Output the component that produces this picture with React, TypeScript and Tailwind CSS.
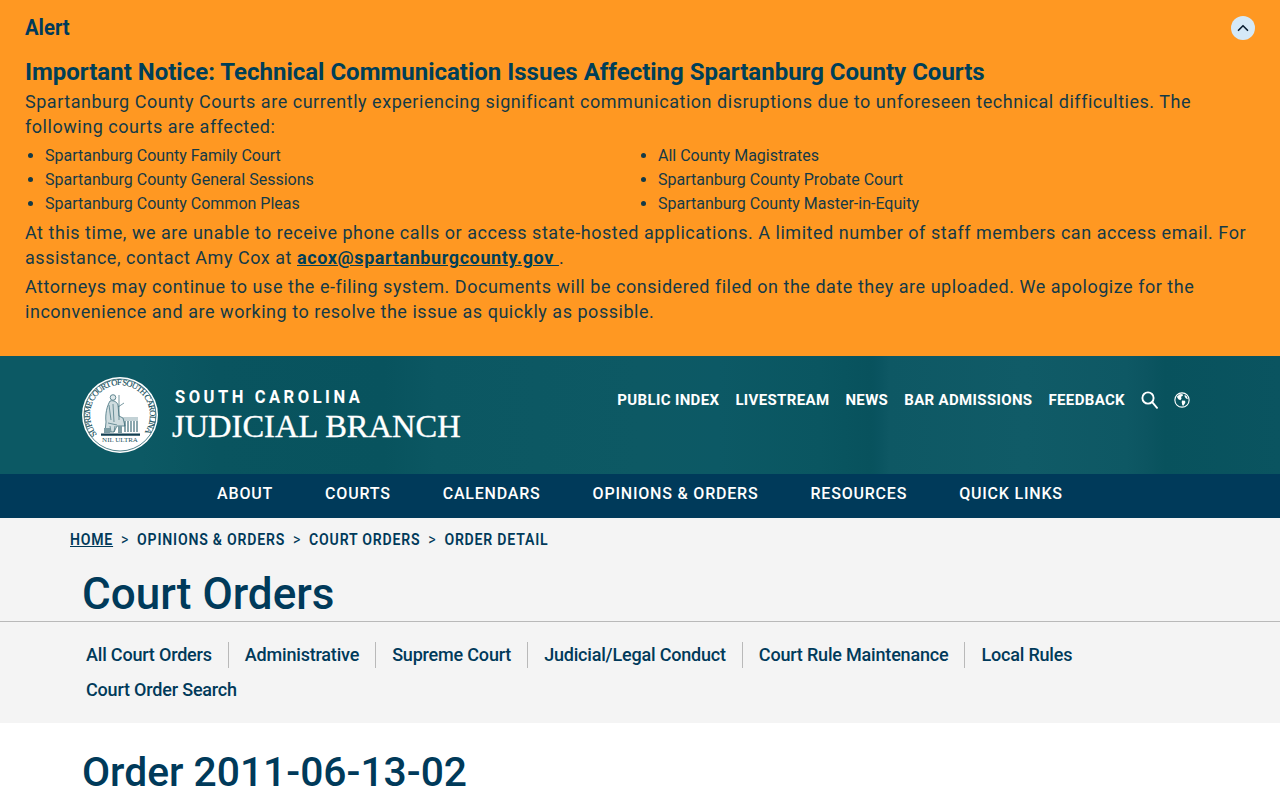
import { ChevronUp } from "lucide-react";

function Seal() {
  return (
    <svg width="78" height="78" viewBox="0 0 78 78" className="shrink-0">
      <ellipse cx="39" cy="39" rx="38" ry="38" fill="#ffffff" />
      <circle cx="39" cy="39" r="36" fill="none" stroke="#0b4f5c" strokeWidth="0.7" />
      <defs>
        <path id="sealArc" d="M 16 58.3 A 30 30 0 1 1 62 58.3" />
      </defs>
      <text fontFamily="'Liberation Serif', serif" fontSize="8.6" fill="#1a5260" stroke="#1a5260" strokeWidth="0.15">
        <textPath href="#sealArc" textLength="133" lengthAdjust="spacing">SUPREME COURT OF SOUTH CAROLINA</textPath>
      </text>
      {/* seated figure */}
      <circle cx="32" cy="21.5" r="2.8" fill="#dfe8ea" stroke="#3f6d79" strokeWidth="0.8" />
      <path d="M29 25 C26 30 24 38 25 46 L24 56 L33 56 L36 50 L44 50 L42 42 L38 40 L37 29 C36 26 33 24 29 25 Z" fill="#cfdcdf" stroke="#44717d" strokeWidth="0.8" />
      <path d="M28 29 L30 44 M32 28 L33 46 M27 47 L36 49 M37 31 L43 27 M38 19 V44 M29 50 L30 56 M34 50 L33 56" stroke="#3f6d79" strokeWidth="0.7" fill="none" />
      {/* columns */}
      <path d="M42 42 H57 M42 44 H57" stroke="#557f8a" strokeWidth="0.7" fill="none" />
      <path d="M44 45 V56 M47 45 V56 M50 45 V56 M53 45 V56 M56 45 V56" stroke="#3f6d79" strokeWidth="1.2" fill="none" />
      <path d="M23 52 H29 V57 H23 Z M37 50 H41 V57 H37 Z" fill="#7c9ca4" />
      {/* base and ribbon */}
      <path d="M20 57.5 H59 V59.8 H20 Z" fill="#123f52" />
      <text x="39" y="66.3" textAnchor="middle" fontFamily="'Liberation Serif', serif" fontSize="7" fill="#1a5260">NIL ULTRA</text>
    </svg>
  );
}

function Globe() {
  return (
    <svg width="16" height="16" viewBox="0 0 17 17" fill="none">
      <circle cx="8.5" cy="8.5" r="7.6" fill="#0b5560" stroke="#ffffff" strokeWidth="1.2" />
      <path d="M3 5 L6 2.4 L9 2.2 L9.5 4 L7.5 5 L8 7 L6.8 8.8 L4.6 7.6 Z M8.5 9 L11.8 9.2 L12 11.4 L10 14.5 L8.8 14 L8.2 11 Z M11.2 3 L13.6 4.5 L14.8 7.6 L12.8 7 L11.4 5 Z" fill="#ffffff" />
    </svg>
  );
}

function Search() {
  return (
    <svg width="17" height="18" viewBox="0 0 17 18" fill="none" stroke="#fff" strokeWidth="1.9" strokeLinecap="round">
      <circle cx="7" cy="7" r="5.6" />
      <path d="M11.2 11.2 L16 16.8" />
    </svg>
  );
}

const tabs1 = ["All Court Orders", "Administrative", "Supreme Court", "Judicial/Legal Conduct", "Court Rule Maintenance", "Local Rules"];

export default function App() {
  return (
    <div className="h-[800px] overflow-hidden bg-white font-['Roboto',sans-serif] text-[#003a5a]">
      <section className="h-[356px] bg-[#ff9822] pl-[25px] pr-[25px] text-[#143a47]">
        <div className="flex items-center justify-between pt-[15px]">
          <h2 className="origin-left scale-x-[0.92] text-[22px] leading-[25px] font-bold text-[#003a5a]">Alert</h2>
          <button className="flex h-6 w-6 items-center justify-center rounded-full bg-[#d5e9f7]">
            <ChevronUp size={18} strokeWidth={2.2} className="text-[#0b1f33]" />
          </button>
        </div>
        <h3 className="mt-[17px] text-[24px] leading-[30px] font-bold whitespace-nowrap text-[#003f58]">Important Notice: Technical Communication Issues Affecting Spartanburg County Courts</h3>
        <p className="mt-[2px] text-[18px] leading-[25px] tracking-[0.53px]">Spartanburg County Courts are currently experiencing significant communication disruptions due to unforeseen technical difficulties. The following courts are affected:</p>
        <div className="mt-[5px] grid grid-cols-[613px_1fr] text-[16px] leading-[24px]">
          <ul className="list-disc pl-5">
            <li>Spartanburg County Family Court</li>
            <li>Spartanburg County General Sessions</li>
            <li>Spartanburg County Common Pleas</li>
          </ul>
          <ul className="list-disc pl-5">
            <li>All County Magistrates</li>
            <li>Spartanburg County Probate Court</li>
            <li>Spartanburg County Master-in-Equity</li>
          </ul>
        </div>
        <p className="mt-[4px] text-[18px] leading-[25px] tracking-[0.53px]">At this time, we are unable to receive phone calls or access state-hosted applications. A limited number of staff members can access email. For assistance, contact Amy Cox at <a className="font-bold tracking-[0.6px] text-[#003f58] underline">acox@spartanburgcounty.gov </a>.</p>
        <p className="mt-[4px] text-[18px] leading-[25px] tracking-[0.53px]">Attorneys may continue to use the e-filing system. Documents will be considered filed on the date they are uploaded. We apologize for the inconvenience and are working to resolve the issue as quickly as possible.</p>
      </section>

      <header className="flex h-[118px] items-start justify-between bg-[#0a5561] bg-[linear-gradient(90deg,#0c5964_0%,#0c5964_11%,#09545f_17%,#08535e_30%,#0b5762_34%,#0d5964_50%,#0c5965_56%,#0a5661_64%,#08525d_68%,#09535f_68.5%,#0e5864_69.5%,#105b67_80%,#0e5864_88%,#0c5561_89.5%,#08525d_91%,#0a5460_100%)] pl-[81px] pr-[90px]">
        <div className="flex items-center pb-[2px] pt-[20px]">
          <Seal />
          <div className="ml-[13px] pb-[2px] text-white">
            <div className="ml-[3px] origin-left scale-x-[0.87] text-[19px] leading-[22px] font-bold tracking-[4.05px] whitespace-nowrap">SOUTH CAROLINA</div>
            <div className="mt-[1px] font-['Liberation_Serif',serif] text-[32.5px] leading-[34px] whitespace-nowrap [-webkit-text-stroke:0.35px_white]">JUDICIAL BRANCH</div>
          </div>
        </div>
        <nav className="flex items-center gap-4 pt-[35px] text-[15px] leading-[18px] font-bold tracking-[0.35px] text-white">
          <a>PUBLIC INDEX</a>
          <a>LIVESTREAM</a>
          <a>NEWS</a>
          <a>BAR ADMISSIONS</a>
          <a>FEEDBACK</a>
          <Search />
          <Globe />
        </nav>
      </header>

      <nav className="flex h-[44px] items-center justify-center gap-[52px] bg-[#003a5a] pb-[5px] text-[16px] font-medium tracking-[0.8px] text-white">
        <a>ABOUT</a>
        <a>COURTS</a>
        <a>CALENDARS</a>
        <a>OPINIONS &amp; ORDERS</a>
        <a>RESOURCES</a>
        <a>QUICK LINKS</a>
      </nav>

      <section className="h-[205px] bg-[#f4f4f4]">
        <div className="ml-[70px] flex origin-left scale-x-[0.88] items-center pt-[12px] text-[16px] leading-[19px] font-semibold tracking-[0.9px] whitespace-nowrap">
          <a className="underline">HOME</a>
          <span className="mx-[9px] font-normal">&gt;</span>
          <a>OPINIONS &amp; ORDERS</a>
          <span className="mx-[9px] font-normal">&gt;</span>
          <a>COURT ORDERS</a>
          <span className="mx-[9px] font-normal">&gt;</span>
          <a>ORDER DETAIL</a>
        </div>
        <h1 className="mt-[19px] pl-[82px] text-[44px] leading-[52px] font-medium">Court Orders</h1>
        <div className="mt-[1px] border-t border-[#b9b9b9] pl-[70px] pt-[15px]">
          <ul className="flex w-[1100px] flex-wrap text-[18px] leading-[35px] font-medium tracking-[-0.19px]">
            {tabs1.map((t, i) => (
              <li key={t} className="flex items-center">
                {i > 0 && <span className="h-[26px] w-px bg-[#b9b9b9]" />}
                <a className="px-4">{t}</a>
              </li>
            ))}
            <li className="w-full px-4">Court Order Search</li>
          </ul>
        </div>
      </section>

      <h2 className="pl-[82px] pt-[24px] text-[40.8px] leading-[50px] font-medium">Order 2011-06-13-02</h2>
    </div>
  );
}
